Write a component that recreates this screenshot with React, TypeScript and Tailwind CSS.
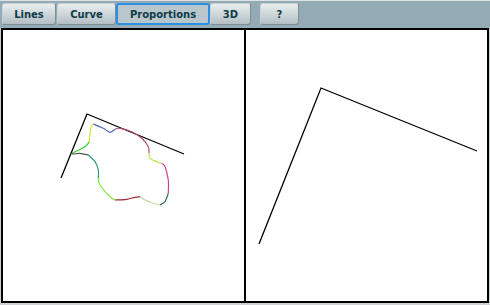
import type { ReactNode } from 'react'

type Pt = [number, number]

// Catmull-Rom through points -> cubic bezier path
function smooth(pts: Pt[]) {
  let d = `M${pts[0][0]},${pts[0][1]}`
  for (let i = 0; i < pts.length - 1; i++) {
    const p0 = pts[i - 1] ?? pts[i]
    const p1 = pts[i]
    const p2 = pts[i + 1]
    const p3 = pts[i + 2] ?? p2
    const c1x = p1[0] + (p2[0] - p0[0]) / 6
    const c1y = p1[1] + (p2[1] - p0[1]) / 6
    const c2x = p2[0] - (p3[0] - p1[0]) / 6
    const c2y = p2[1] - (p3[1] - p1[1]) / 6
    d += ` C${c1x},${c1y} ${c2x},${c2y} ${p2[0]},${p2[1]}`
  }
  return d
}

const blob: { color: string; pts: Pt[] }[] = [
  { color: '#33d633', pts: [[72, 153.3], [85, 146.7], [89.3, 141.7]] },
  { color: '#d8e82a', pts: [[89.3, 141.7], [90.7, 128.3], [93.3, 124]] },
  { color: '#4f64b8', pts: [[93.3, 124], [103.3, 128.3], [110, 132.3], [115, 129.3]] },
  { color: '#b8506e', pts: [[115, 129.3], [120, 128.3], [131.7, 131.7], [141.7, 138.3], [148.3, 146.7], [149, 153.3]] },
  { color: '#b6e83a', pts: [[149, 153.3], [150, 158.3], [156.7, 161.7], [161.7, 163.3]] },
  { color: '#d0408c', pts: [[161.7, 163.3], [165, 166.7], [168.3, 180], [168.3, 193.3]] },
  { color: '#2f6e5a', pts: [[168.3, 193.3], [165, 201.7], [160, 205]] },
  { color: '#c4d8a8', pts: [[160, 205], [153.3, 203.3], [145, 200], [140, 196.7]] },
  { color: '#a02838', pts: [[140, 196.7], [135, 197.3], [126.7, 199.3], [115, 200]] },
  { color: '#7ae83a', pts: [[115, 200], [110, 196.7], [100, 185], [98.3, 178.3]] },
  { color: '#2e9a7a', pts: [[98.3, 178.3], [98.3, 170], [95, 161.7], [88.3, 155]] },
  { color: '#4a5a48', pts: [[88.3, 155], [80, 153.3], [73.3, 154], [72, 153.3]] },
]

function ToolButton({ children, w, active }: { children: ReactNode; w: string; active?: boolean }) {
  return (
    <div
      className={`${w} flex h-[22px] items-center justify-center rounded-[3px] text-[10px] font-bold text-[#0f3b47] ${
        active
          ? 'border-2 border-[#2b8fe2] bg-[#b9c7cd]'
          : 'border border-[#7d8e96] border-t-[#c9d2d6] border-l-[#c9d2d6] bg-gradient-to-b from-[#eaeeef] to-[#b3bfc4]'
      }`}
      style={{ fontFamily: '"DejaVu Sans", Verdana, sans-serif' }}
    >
      {children}
    </div>
  )
}

export default function App() {
  return (
    <div className="h-[305px] w-[490px] overflow-hidden bg-[#cfd2d3]">
      <div className="h-[28px] w-full border-t border-[#dde2e4] bg-[#94aab4] pl-[2px] pt-[2px]">
        <div className="flex items-center">
          <ToolButton w="w-[54px]">Lines</ToolButton>
          <ToolButton w="w-[59px] ml-px">Curve</ToolButton>
          <ToolButton w="w-[94px]" active>
            Proportions
          </ToolButton>
          <ToolButton w="w-[41px]">3D</ToolButton>
          <ToolButton w="w-[39px] ml-[9px]">?</ToolButton>
        </div>
      </div>
      <div className="ml-px flex h-[275px] w-[488px] border-2 border-black bg-white">
        <div className="h-full w-[243px] border-r-2 border-black">
          <svg width="241" height="271" viewBox="3 30 241 271" className="block">
            <polyline points="61,178 87,114 184,154" fill="none" stroke="#000" strokeWidth="1.3" />
            {blob.map((s, i) => (
              <path key={i} d={smooth(s.pts)} fill="none" stroke={s.color} strokeWidth="1.2" />
            ))}
          </svg>
        </div>
        <div className="h-full flex-1">
          <svg width="241" height="271" viewBox="245 30 241 271" className="block">
            <polyline points="258,244 320,88 476,151" fill="none" stroke="#000" strokeWidth="1.3" />
          </svg>
        </div>
      </div>
    </div>
  )
}
